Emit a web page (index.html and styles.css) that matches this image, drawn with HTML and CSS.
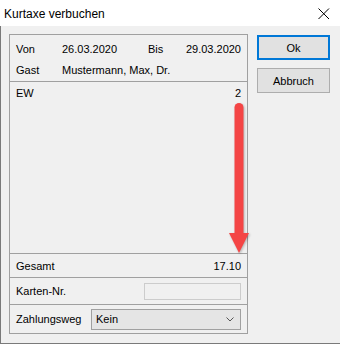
FILE: index.html
```html
<!DOCTYPE html>
<html lang="de">
<head>
  <meta charset="UTF-8">
  <title>Kurtaxe verbuchen</title>
  <link rel="stylesheet" href="styles.css">
</head>
<body>
  <div class="window">
    <div class="titlebar">
      <span class="title">Kurtaxe verbuchen</span>
      <svg class="close" width="12" height="12" viewBox="0 0 12 12">
        <path d="M0.5 0.5 L11 11 M11 0.5 L0.5 11" stroke="#000" stroke-width="1" fill="none"/>
      </svg>
    </div>

    <div class="content">
      <div class="panel">
        <div class="section period">
          <span>Von</span>
          <span>26.03.2020</span>
          <span>Bis</span>
          <span class="num">29.03.2020</span>
          <span>Gast</span>
          <span class="guest">Mustermann, Max, Dr.</span>
        </div>

        <div class="section items">
          <div class="row">
            <span>EW</span>
            <span class="num">2</span>
          </div>
          <svg class="arrow" width="20" height="150" viewBox="0 0 20 150">
            <rect x="5.5" y="0" width="9" height="134" rx="4.5" fill="#f44545"/>
            <polygon points="0,130 20,130 10,150" fill="#f44545"/>
          </svg>
        </div>

        <div class="section total row">
          <span>Gesamt</span>
          <span class="num">17.10</span>
        </div>

        <div class="section card row">
          <span>Karten-Nr.</span>
          <input class="card-input" type="text" disabled>
        </div>

        <div class="section payment row">
          <span>Zahlungsweg</span>
          <div class="select">
            <span>Kein</span>
            <svg width="8" height="5" viewBox="0 0 8 5">
              <path d="M0.5 0.5 L4 4 L7.5 0.5" stroke="#555" stroke-width="1" fill="none"/>
            </svg>
          </div>
        </div>
      </div>

      <div class="actions">
        <button class="btn default">Ok</button>
        <button class="btn">Abbruch</button>
      </div>
    </div>
  </div>
</body>
</html>
```

FILE: styles.css
```css
body {
  margin: 0;
  width: 340px;
  height: 344px;
  font-family: "Liberation Sans", Arial, sans-serif;
  font-size: 11px;
  color: #000;
  background-color: #f0f0f0;
  overflow: hidden;
}

.window {
  width: 340px;
  height: 344px;
  display: flex;
  flex-direction: column;
}

.titlebar {
  height: 26px;
  background-color: #fff;
  display: flex;
  align-items: center;
  justify-content: space-between;
  padding: 0 10px 0 4px;
  flex-shrink: 0;
}

.title {
  font-size: 12px;
  padding-top: 1px;
}

.close {
  margin-top: 1px;
}

.content {
  flex: 1;
  display: flex;
  gap: 9px;
  padding: 8px 0 0 8px;
  border-left: 1px solid #7a7a7a;
  border-bottom: 1px solid #7a7a7a;
  background-color: #f0f0f0;
}

.panel {
  width: 239px;
  height: 300px;
  box-sizing: border-box;
  border: 1px solid #a0a0a0;
  display: flex;
  flex-direction: column;
}

.section {
  border-bottom: 1px solid #a0a0a0;
  box-sizing: border-box;
}

.section:last-child {
  border-bottom: none;
}

.row {
  display: flex;
  align-items: center;
  justify-content: space-between;
  padding: 0 6px;
}

.num {
  text-align: right;
}

.period {
  height: 47px;
  padding: 3px 6px 0;
  display: grid;
  grid-template-columns: 46px 86px 1fr auto;
  grid-auto-rows: 21px;
  align-items: center;
}

.guest {
  grid-column: 2 / 5;
}

.items {
  flex: 1;
  position: relative;
  padding-top: 3px;
}

.items .row {
  height: 16px;
}

.arrow {
  position: absolute;
  left: 219px;
  top: 21px;
  z-index: 2;
  filter: drop-shadow(1px 1px 1px rgba(0, 0, 0, 0.25));
}

.total {
  height: 24px;
}

.card {
  height: 27px;
}

.card-input {
  width: 97px;
  height: 17px;
  box-sizing: border-box;
  margin: 0;
  border: 1px solid #cccccc;
  background-color: #f0f0f0;
}

.payment {
  height: 28px;
}

.select {
  width: 150px;
  height: 21px;
  box-sizing: border-box;
  border: 1px solid #a0a0a0;
  background-color: #e5e5e5;
  display: flex;
  align-items: center;
  justify-content: space-between;
  padding: 0 6px 0 4px;
}

.actions {
  display: flex;
  flex-direction: column;
  gap: 8px;
  padding-top: 1px;
}

.btn {
  width: 73px;
  height: 25px;
  box-sizing: border-box;
  margin: 0;
  padding: 0;
  border: 1px solid #adadad;
  background-color: #e1e1e1;
  font-family: "Liberation Sans", Arial, sans-serif;
  font-size: 11px;
  color: #000;
}

.btn.default {
  border: 2px solid #0078d7;
}
```
